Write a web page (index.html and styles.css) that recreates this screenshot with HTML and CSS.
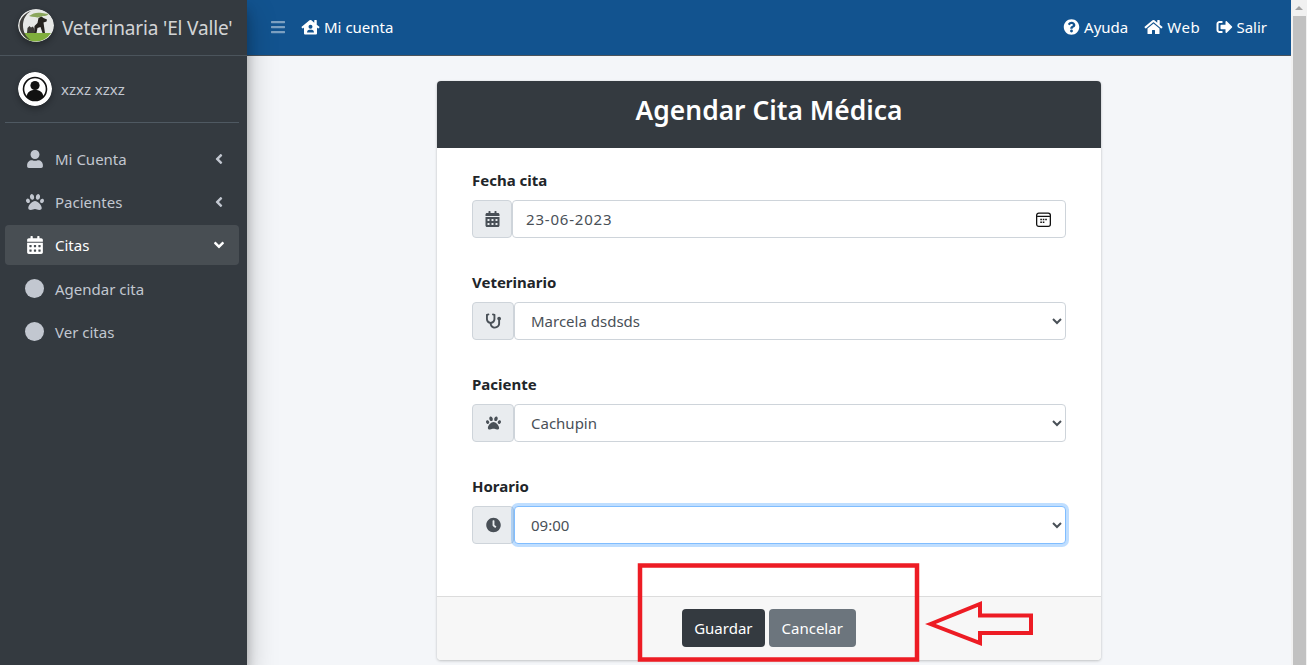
FILE: index.html
```html
<!DOCTYPE html>
<html>
<head>
    <meta charset="utf-8">
    <title>Agendar Cita Médica</title>
    <link rel="stylesheet" href="styles.css">
</head>
<body>
    <div class="app">
        <aside class="sidebar">
            <div class="brand">
                <svg class="brand-logo" viewBox="0 0 36 33" preserveAspectRatio="none">
                    <ellipse cx="18" cy="16.500" rx="18" ry="16.500" fill="#e6e8e6"/>
                    <path d="M4 24h29a18 16.500 0 0 1-7 6.500c-5 2.500-11 2.500-16 .5a18 16.500 0 0 1-6-7z" fill="#7fae3c"/>
                    <path d="M16 24l.5-7 3-3 1-5 3-1.500 2 1.500 3.500 1.500-.5 2-3 1 1.500 10.500h-2.500l-2-6-3 1-1 5z" fill="#25231f"/>
                    <path d="M9 24l.5-5 2-2 1.500 1.500 2-1 1 2v4.500z" fill="#3d3b37"/>
                    <path d="M11 7c4-3 8-4 13-3 3 .5 5 1 7 .5-2 2.500-4 2.500-6 2.500-3 1-5 2-8 1-2 0-4-.5-6-1z" fill="#8aa65c"/>
                    <path d="M13 2C6 4.500 1.500 10 1.500 16.500 1.500 24 7 29.500 13 31.500 8 28 5 23 5 16.500S8 5 13 2z" fill="#3f3e3b"/>
                </svg>
                <span class="brand-text">Veterinaria 'El Valle'</span>
            </div>
            <div class="user-panel">
                <svg class="user-avatar" viewBox="0 0 34 34">
                    <circle cx="17" cy="17" r="17" fill="#fff"/>
                    <circle cx="17" cy="17" r="11.500" fill="none" stroke="#111" stroke-width="1.600"/>
                    <circle cx="17" cy="13.500" r="4.600" fill="#111"/>
                    <path d="M8.500 24.500c1-5 4-6.500 8.500-6.500s7.500 1.500 8.500 6.500a11.500 11.500 0 0 1-17 0z" fill="#111"/>
                </svg>
                <span class="user-name">xzxz xzxz</span>
            </div>
            <nav class="side-nav">
                <a class="side-link">
                    <svg class="side-icon" viewBox="0 0 448 512"><path d="M224 256c70.700 0 128-57.300 128-128S294.700 0 224 0 96 57.300 96 128s57.300 128 128 128zm89.600 32h-16.700c-22.200 10.200-46.900 16-72.900 16s-50.600-5.800-72.900-16h-16.700C60.200 288 0 348.200 0 422.400V464c0 26.500 21.500 48 48 48h352c26.500 0 48-21.500 48-48v-41.600c0-74.200-60.200-134.400-134.400-134.400z"/></svg>
                    <span class="side-label">Mi Cuenta</span>
                    <svg class="side-caret" viewBox="0 0 256 512"><path d="M31.700 239l136-136c9.400-9.400 24.600-9.400 33.900 0l22.600 22.600c9.400 9.400 9.400 24.600 0 33.900L127.900 256l96.400 96.400c9.400 9.400 9.400 24.600 0 33.900L201.700 409c-9.400 9.400-24.600 9.400-33.900 0l-136-136c-9.500-9.400-9.500-24.600-.1-34z"/></svg>
                </a>
                <a class="side-link">
                    <svg class="side-icon" viewBox="0 0 512 512"><path d="M256 224c-79.410 0-192 122.760-192 200.250 0 34.900 26.810 55.750 71.740 55.750 48.840 0 81.090-25.080 120.260-25.080 39.510 0 71.850 25.080 120.260 25.080 44.930 0 71.740-20.850 71.740-55.750C448 346.760 335.410 224 256 224zm-147.280-12.610c-10.400-34.650-42.440-57.090-71.560-50.130-29.120 6.960-44.290 40.690-33.890 75.340 10.400 34.650 42.440 57.090 71.560 50.130 29.120-6.960 44.290-40.690 33.890-75.340zm84.720-20.780c30.940-8.140 46.420-49.940 34.580-93.360s-46.520-72.010-77.460-63.870-46.420 49.940-34.580 93.360c11.840 43.420 46.520 72.020 77.460 63.870zm281.390-29.340c-29.120-6.960-61.150 15.480-71.560 50.130-10.400 34.650 4.770 68.380 33.890 75.340 29.120 6.960 61.150-15.480 71.560-50.130 10.400-34.650-4.770-68.380-33.890-75.340zm-156.270 29.340c30.940 8.140 65.620-20.450 77.460-63.870 11.840-43.420-3.640-85.210-34.580-93.360s-65.620 20.450-77.460 63.870c-11.840 43.420 3.640 85.220 34.580 93.360z"/></svg>
                    <span class="side-label">Pacientes</span>
                    <svg class="side-caret" viewBox="0 0 256 512"><path d="M31.700 239l136-136c9.400-9.400 24.600-9.400 33.900 0l22.600 22.600c9.400 9.400 9.400 24.600 0 33.900L127.900 256l96.400 96.400c9.400 9.400 9.400 24.600 0 33.900L201.700 409c-9.400 9.400-24.600 9.400-33.900 0l-136-136c-9.500-9.400-9.500-24.600-.1-34z"/></svg>
                </a>
                <a class="side-link active">
                    <svg class="side-icon" viewBox="0 0 448 512"><path d="M0 464c0 26.500 21.500 48 48 48h352c26.500 0 48-21.500 48-48V192H0v272zm320-196c0-6.600 5.400-12 12-12h40c6.600 0 12 5.400 12 12v40c0 6.600-5.400 12-12 12h-40c-6.600 0-12-5.400-12-12v-40zm0 128c0-6.600 5.400-12 12-12h40c6.600 0 12 5.400 12 12v40c0 6.600-5.400 12-12 12h-40c-6.600 0-12-5.400-12-12v-40zM192 268c0-6.600 5.400-12 12-12h40c6.600 0 12 5.400 12 12v40c0 6.600-5.400 12-12 12h-40c-6.600 0-12-5.400-12-12v-40zm0 128c0-6.600 5.400-12 12-12h40c6.600 0 12 5.400 12 12v40c0 6.600-5.400 12-12 12h-40c-6.600 0-12-5.400-12-12v-40zM64 268c0-6.600 5.400-12 12-12h40c6.600 0 12 5.400 12 12v40c0 6.600-5.400 12-12 12H76c-6.600 0-12-5.400-12-12v-40zm0 128c0-6.600 5.400-12 12-12h40c6.600 0 12 5.400 12 12v40c0 6.600-5.400 12-12 12H76c-6.600 0-12-5.400-12-12v-40zM400 64h-48V16c0-8.800-7.200-16-16-16h-32c-8.800 0-16 7.200-16 16v48H160V16c0-8.800-7.200-16-16-16h-32c-8.800 0-16 7.200-16 16v48H48C21.500 64 0 85.500 0 112v48h448v-48c0-26.500-21.500-48-48-48z"/></svg>
                    <span class="side-label">Citas</span>
                    <svg class="side-caret down" viewBox="0 0 320 512"><path d="M143 352.300L7 216.300c-9.400-9.400-9.400-24.600 0-33.900l22.600-22.600c9.400-9.400 24.600-9.400 33.900 0l96.400 96.400 96.400-96.400c9.400-9.400 24.600-9.400 33.900 0l22.600 22.600c9.400 9.400 9.400 24.600 0 33.900l-136 136c-9.200 9.400-24.400 9.400-33.800 0z"/></svg>
                </a>
                <a class="side-link">
                    <span class="side-dot"></span>
                    <span class="side-label">Agendar cita</span>
                </a>
                <a class="side-link">
                    <span class="side-dot"></span>
                    <span class="side-label">Ver citas</span>
                </a>
            </nav>
        </aside>

        <div class="main">
            <header class="topbar">
                <svg class="bars" viewBox="0 0 448 512"><path d="M16 132h416c8.837 0 16-7.163 16-16V76c0-8.837-7.163-16-16-16H16C7.163 60 0 67.163 0 76v40c0 8.837 7.163 16 16 16zm0 160h416c8.837 0 16-7.163 16-16v-40c0-8.837-7.163-16-16-16H16c-8.837 0-16 7.163-16 16v40c0 8.837 7.163 16 16 16zm0 160h416c8.837 0 16-7.163 16-16v-40c0-8.837-7.163-16-16-16H16c-8.837 0-16 7.163-16 16v40c0 8.837 7.163 16 16 16z"/></svg>
                <a class="top-link">
                    <svg class="top-icon house" viewBox="0 0 576 512"><path fill-rule="evenodd" d="M571 251L488 183V44a12 12 0 0 0-12-12h-56a12 12 0 0 0-12 12v73L318 43a48 48 0 0 0-61 0L5 251a12 12 0 0 0-2 17l26 31a12 12 0 0 0 17 2l34-28v187a32 32 0 0 0 32 32h352a32 32 0 0 0 32-32V273l34 28a12 12 0 0 0 17-2l26-31a12 12 0 0 0-2-17zM288 184a64 64 0 1 1 0 128 64 64 0 0 1 0-128zM176 432c0-48 32-88 76-88h72c44 0 76 40 76 88z"/></svg>
                    Mi cuenta
                </a>
                <div class="top-right">
                    <a class="top-link">
                        <svg class="top-icon" viewBox="0 0 512 512"><path d="M504 256c0 136.997-111.043 248-248 248S8 392.997 8 256C8 119.083 119.043 8 256 8s248 111.083 248 248zM262.655 90c-54.497 0-89.255 22.957-116.549 63.758-3.536 5.286-2.353 12.415 2.715 16.258l34.699 26.310c5.205 3.947 12.621 3.008 16.665-2.122 17.864-22.658 30.113-35.797 57.303-35.797 20.429 0 45.698 13.148 45.698 32.958 0 14.976-12.363 22.667-32.534 33.976C247.128 238.528 216 254.941 216 296v4c0 6.627 5.373 12 12 12h56c6.627 0 12-5.373 12-12v-1.333c0-28.462 83.186-29.647 83.186-106.667 0-58.002-60.165-102-116.531-102zM256 338c-25.365 0-46 20.635-46 46 0 25.364 20.635 46 46 46s46-20.636 46-46c0-25.365-20.635-46-46-46z"/></svg>
                        Ayuda
                    </a>
                    <a class="top-link link-web">
                        <svg class="top-icon wide" viewBox="0 0 576 512"><path d="M280.370 148.260L96 300.110V464a16 16 0 0 0 16 16l112.060-.29a16 16 0 0 0 15.920-16V368a16 16 0 0 1 16-16h64a16 16 0 0 1 16 16v95.640a16 16 0 0 0 16 16.050L464 480a16 16 0 0 0 16-16V300L295.670 148.260a12.190 12.190 0 0 0-15.300 0zM571.600 251.470L488 182.560V44.050a12 12 0 0 0-12-12h-56a12 12 0 0 0-12 12v72.610L318.470 43a48 48 0 0 0-61 0L4.340 251.470a12 12 0 0 0-1.600 16.900l25.500 31A12 12 0 0 0 45.150 301l235.220-193.740a12.190 12.190 0 0 1 15.300 0L530.900 301a12 12 0 0 0 16.900-1.600l25.500-31a12 12 0 0 0-1.700-16.930z"/></svg>
                        Web
                    </a>
                    <a class="top-link link-exit">
                        <svg class="top-icon" viewBox="0 0 512 512"><path d="M497 273L329 441c-15 15-41 4.500-41-17v-96H152c-13.300 0-24-10.700-24-24v-96c0-13.300 10.700-24 24-24h136V88c0-21.400 25.900-32 41-17l168 168c9.300 9.400 9.300 24.600 0 34zM192 436v-40c0-6.600-5.400-12-12-12H96c-17.700 0-32-14.300-32-32V160c0-17.700 14.300-32 32-32h84c6.600 0 12-5.400 12-12V76c0-6.600-5.400-12-12-12H96c-53 0-96 43-96 96v192c0 53 43 96 96 96h84c6.600 0 12-5.400 12-12z"/></svg>
                        Salir
                    </a>
                </div>
            </header>

            <main class="content">
                <div class="card">
                    <div class="card-header">Agendar Cita Médica</div>
                    <div class="card-body">
                        <div class="field">
                            <label class="field-label">Fecha cita</label>
                            <div class="input-group">
                                <span class="addon addon-date">
                                    <svg class="addon-icon" viewBox="0 0 448 512"><path d="M0 464c0 26.500 21.500 48 48 48h352c26.500 0 48-21.500 48-48V192H0v272zm320-196c0-6.600 5.400-12 12-12h40c6.600 0 12 5.400 12 12v40c0 6.600-5.400 12-12 12h-40c-6.600 0-12-5.400-12-12v-40zm0 128c0-6.600 5.400-12 12-12h40c6.600 0 12 5.400 12 12v40c0 6.600-5.400 12-12 12h-40c-6.600 0-12-5.400-12-12v-40zM192 268c0-6.600 5.400-12 12-12h40c6.600 0 12 5.400 12 12v40c0 6.600-5.400 12-12 12h-40c-6.600 0-12-5.400-12-12v-40zm0 128c0-6.600 5.400-12 12-12h40c6.600 0 12 5.400 12 12v40c0 6.600-5.400 12-12 12h-40c-6.600 0-12-5.400-12-12v-40zM64 268c0-6.600 5.400-12 12-12h40c6.600 0 12 5.400 12 12v40c0 6.600-5.400 12-12 12H76c-6.600 0-12-5.400-12-12v-40zm0 128c0-6.600 5.400-12 12-12h40c6.600 0 12 5.400 12 12v40c0 6.600-5.400 12-12 12H76c-6.600 0-12-5.400-12-12v-40zM400 64h-48V16c0-8.800-7.200-16-16-16h-32c-8.800 0-16 7.200-16 16v48H160V16c0-8.800-7.200-16-16-16h-32c-8.800 0-16 7.200-16 16v48H48C21.500 64 0 85.500 0 112v48h448v-48c0-26.500-21.500-48-48-48z"/></svg>
                                </span>
                                <div class="control date-control">
                                    <span class="date-value">23-06-2023</span>
                                    <svg class="picker-icon" viewBox="0 0 14 14">
                                        <rect x=".6" y="1" width="12.800" height="12.400" rx="2" fill="none" stroke="#111" stroke-width="1.200"/>
                                        <path d="M1 4h12" stroke="#111" stroke-width="1.200"/>
                                        <path d="M4 6.200h1.500v1.500H4zM6.300 6.200h1.500v1.500H6.300zM8.600 6.200h1.500v1.500H8.600zM4 8.800h1.500v1.500H4zM6.300 8.800h1.500v1.500H6.300z" fill="#111"/>
                                    </svg>
                                </div>
                            </div>
                        </div>
                        <div class="field">
                            <label class="field-label">Veterinario</label>
                            <div class="input-group">
                                <span class="addon">
                                    <svg class="addon-icon" viewBox="0 0 512 512"><path d="M447.100 112c-34.200.5-62.300 28.400-63 62.600-.5 24.300 12.500 45.600 32 56.800V344c0 57.300-50.200 104-112 104-60 0-109.200-44.100-111.900-99.200C265 333.800 320 269.200 320 192V36.600c0-11.400-8.100-21.300-19.300-23.500L237.800.5c-13-2.600-25.600 5.800-28.200 18.800L206.400 35c-2.600 13 5.800 25.600 18.800 28.200l30.700 6.100v121.400c0 52.900-42.200 96.700-95.100 97.200-53.400.5-96.900-42.700-96.900-96V69.400l30.700-6.100c13-2.600 21.400-15.200 18.800-28.200l-3.100-15.700C107.700 6.400 95.100-2 82.100.6L19.300 13C8.100 15.300 0 25.100 0 36.600V192c0 77.300 55.100 142 128.100 156.800C130.700 439.200 208.600 512 304 512c97 0 176-75.400 176-168V231.400c19.100-11.100 32-31.700 32-55.400 0-35.700-29.200-64.500-64.900-64z"/></svg>
                                </span>
                                <select class="control"><option>Marcela dsdsds</option></select>
                            </div>
                        </div>
                        <div class="field">
                            <label class="field-label">Paciente</label>
                            <div class="input-group">
                                <span class="addon">
                                    <svg class="addon-icon" viewBox="0 0 512 512"><path d="M256 224c-79.410 0-192 122.760-192 200.250 0 34.900 26.810 55.750 71.740 55.750 48.840 0 81.090-25.080 120.260-25.080 39.510 0 71.850 25.080 120.260 25.080 44.930 0 71.740-20.850 71.740-55.750C448 346.760 335.410 224 256 224zm-147.280-12.610c-10.400-34.650-42.440-57.090-71.560-50.130-29.120 6.960-44.290 40.690-33.890 75.340 10.400 34.650 42.440 57.090 71.560 50.130 29.120-6.960 44.290-40.690 33.890-75.340zm84.720-20.780c30.940-8.140 46.420-49.940 34.580-93.360s-46.520-72.010-77.460-63.870-46.420 49.940-34.580 93.360c11.840 43.420 46.520 72.020 77.460 63.870zm281.390-29.340c-29.120-6.960-61.150 15.480-71.560 50.130-10.400 34.650 4.770 68.380 33.890 75.340 29.120 6.960 61.150-15.480 71.560-50.130 10.400-34.650-4.770-68.380-33.890-75.340zm-156.270 29.340c30.940 8.140 65.620-20.450 77.460-63.870 11.840-43.420-3.640-85.210-34.580-93.360s-65.620 20.450-77.460 63.870c-11.840 43.420 3.640 85.220 34.580 93.360z"/></svg>
                                </span>
                                <select class="control"><option>Cachupin</option></select>
                            </div>
                        </div>
                        <div class="field">
                            <label class="field-label">Horario</label>
                            <div class="input-group">
                                <span class="addon">
                                    <svg class="addon-icon" viewBox="0 0 512 512"><path d="M256 8C119 8 8 119 8 256s111 248 248 248 248-111 248-248S393 8 256 8zm92.490 313l-20 25a16 16 0 0 1-22.490 2.500l-67-49.720a40 40 0 0 1-15-31.230V112a16 16 0 0 1 16-16h32a16 16 0 0 1 16 16v144l58 42.500a16 16 0 0 1 2.490 22.500z"/></svg>
                                </span>
                                <select class="control focused"><option>09:00</option></select>
                            </div>
                        </div>
                    </div>
                    <div class="card-footer">
                        <button class="btn btn-dark">Guardar</button>
                        <button class="btn btn-gray">Cancelar</button>
                    </div>
                </div>
            </main>
        </div>

        <div class="scrollbar">
            <span class="scroll-arrow"></span>
            <span class="scroll-thumb"></span>
        </div>
    </div>

    <svg class="annotation" viewBox="0 0 1307 665">
        <rect x="640" y="565.500" width="277" height="94" fill="none" stroke="#ed1c24" stroke-width="4.500"/>
        <path d="M930.500 624L980 604V615.500H1031V633H980V643Z" fill="none" stroke="#ed1c24" stroke-width="4"/>
    </svg>
</body>
</html>
```

FILE: styles.css
```css
* {
    box-sizing: border-box;
}
html, body {
    height: 100%;
}
body {
    margin: 0;
    overflow: hidden;
    font-family: "Noto Sans", "Open Sans", sans-serif;
    font-size: 15px;
    color: #212529;
}
.app {
    display: flex;
    height: 665px;
}

/* sidebar */
.sidebar {
    width: 247px;
    flex: none;
    padding: 0 8px 0 5px;
    background-color: #343a40;
    box-shadow: 0 14px 28px rgba(0,0,0,.25), 0 10px 10px rgba(0,0,0,.22);
    color: #c2c7d0;
    position: relative;
    z-index: 2;
}
.brand {
    display: flex;
    align-items: center;
    gap: 8px;
    height: 56px;
    margin: 0 -8px 0 -5px;
    padding-left: 18px;
    border-bottom: 1px solid #4b545c;
}
.brand-logo {
    width: 36px;
    height: 33px;
    margin-bottom: 5px;
    border-radius: 50%;
    box-shadow: 0 3px 6px rgba(0,0,0,.3);
}
.brand-text {
    font-size: 19px;
    letter-spacing: -.15px;
    color: rgba(255,255,255,.8);
}
.user-panel {
    display: flex;
    align-items: center;
    gap: 9px;
    height: 67px;
    padding-left: 13px;
    border-bottom: 1px solid #4f5962;
}
.user-avatar {
    width: 34px;
    height: 34px;
    border-radius: 50%;
    box-shadow: 0 3px 6px rgba(0,0,0,.3);
}
.user-name {
    font-size: 15px;
    color: #c2c7d0;
}
.side-nav {
    display: flex;
    flex-direction: column;
    gap: 3.2px;
    padding-top: 16px;
}
.side-link {
    display: flex;
    align-items: center;
    height: 40px;
    padding: 0 16px 0 20px;
    border-radius: 4px;
    font-size: 15px;
}
.side-link.active {
    background-color: rgba(255,255,255,.1);
    color: #fff;
}
.side-icon {
    width: 20px;
    height: 18px;
    margin-right: 10px;
    fill: currentColor;
}
.side-dot {
    width: 19px;
    height: 19px;
    margin-right: 11px;
    border-radius: 50%;
    background-color: currentColor;
}
.side-label {
    flex: 1;
}
.side-caret {
    width: 8px;
    height: 16px;
    fill: currentColor;
}
.side-caret.down {
    width: 12px;
    margin-right: -2px;
}

/* top bar */
.main {
    flex: 1;
    min-width: 0;
    display: flex;
    flex-direction: column;
    background-color: #f4f6f9;
}
.topbar {
    display: flex;
    align-items: center;
    height: 56px;
    flex: none;
    padding: 0 24px 2px 24px;
    background-color: #12538f;
    border-bottom: 1px solid #4b545c;
}
.bars {
    width: 14px;
    height: 16px;
    margin-right: 16px;
    fill: rgba(255,255,255,.45);
}
.top-link {
    display: flex;
    align-items: center;
    gap: 4px;
    font-size: 15px;
    color: #fff;
}
.link-web {
    letter-spacing: .6px;
}
.link-exit {
    gap: 3px;
}
.top-icon {
    width: 17px;
    height: 16px;
    fill: #fff;
}
.top-icon.wide {
    width: 19px;
}
.top-icon.house {
    width: 19px;
}
.top-right {
    margin-left: auto;
    display: flex;
    gap: 16px;
}

/* form card */
.content {
    flex: 1;
    padding: 25px 190px 0 190px;
}
.card {
    height: 579px;
    display: flex;
    flex-direction: column;
    border-radius: 4px;
    background-color: #fff;
    box-shadow: 0 0 1px rgba(0,0,0,.125), 0 1px 3px rgba(0,0,0,.2);
    overflow: hidden;
}
.card-header {
    height: 67px;
    flex: none;
    display: flex;
    align-items: center;
    justify-content: center;
    padding-bottom: 9px;
    background-color: #343a40;
    color: #fff;
    font-size: 26.4px;
    font-weight: 600;
}
.card-body {
    flex: 1;
    padding: 20px 35px;
}
.field {
    margin-bottom: 32px;
}
.field-label {
    display: block;
    height: 24px;
    margin-bottom: 8px;
    line-height: 24px;
    font-size: 15px;
    font-weight: 700;
}
.input-group {
    display: flex;
    height: 38px;
}
.addon {
    width: 42px;
    flex: none;
    display: flex;
    align-items: center;
    justify-content: center;
    background-color: #e9ecef;
    border: 1px solid #ced4da;
    border-radius: 4px;
}
.addon-date {
    width: 40px;
}
.addon-icon {
    width: 15px;
    height: 16px;
    fill: #495057;
}
.control {
    flex: 1;
    min-width: 0;
    height: 38px;
    margin: 0;
    padding: 0 12px;
    border: 1px solid #ced4da;
    border-radius: 4px;
    background-color: #fff;
    color: #495057;
    font-family: inherit;
    font-size: 15px;
}
.control.focused {
    border-color: #80bdff;
    box-shadow: 0 0 0 3px rgba(0,123,255,.25);
}
.date-control {
    display: flex;
    align-items: center;
    justify-content: space-between;
    padding-left: 13px;
    padding-right: 14px;
}
.date-value {
    letter-spacing: .8px;
}
.picker-icon {
    width: 15px;
    height: 15px;
}
.card-footer {
    height: 64px;
    flex: none;
    display: flex;
    justify-content: center;
    gap: 4px;
    padding-top: 12px;
    background-color: #f7f7f7;
    border-top: 1px solid #dcdcdc;
}
.btn {
    height: 38px;
    padding: 0 12px;
    border: 1px solid transparent;
    border-radius: 4px;
    color: #fff;
    font-family: inherit;
    font-size: 15px;
}
.btn-dark {
    padding: 0 11px;
    background-color: #343a40;
}
.btn-gray {
    background-color: #6c757d;
}

/* page scrollbar */
.scrollbar {
    width: 16px;
    flex: none;
    display: flex;
    flex-direction: column;
    background-color: #f1f1f1;
}
.scroll-arrow {
    height: 16px;
    flex: none;
    position: relative;
}
.scroll-arrow::before {
    content: "";
    position: absolute;
    left: 4px;
    top: 6px;
    border-left: 4px solid transparent;
    border-right: 4px solid transparent;
    border-bottom: 4px solid #a3a3a3;
}
.scroll-thumb {
    flex: 1;
    margin: 0 1px 0 2px;
    background-color: #c1c1c1;
}

/* red marks drawn on top of the screenshot */
.annotation {
    position: absolute;
    left: 0;
    top: 0;
    width: 1307px;
    height: 665px;
    z-index: 5;
    pointer-events: none;
}
```
